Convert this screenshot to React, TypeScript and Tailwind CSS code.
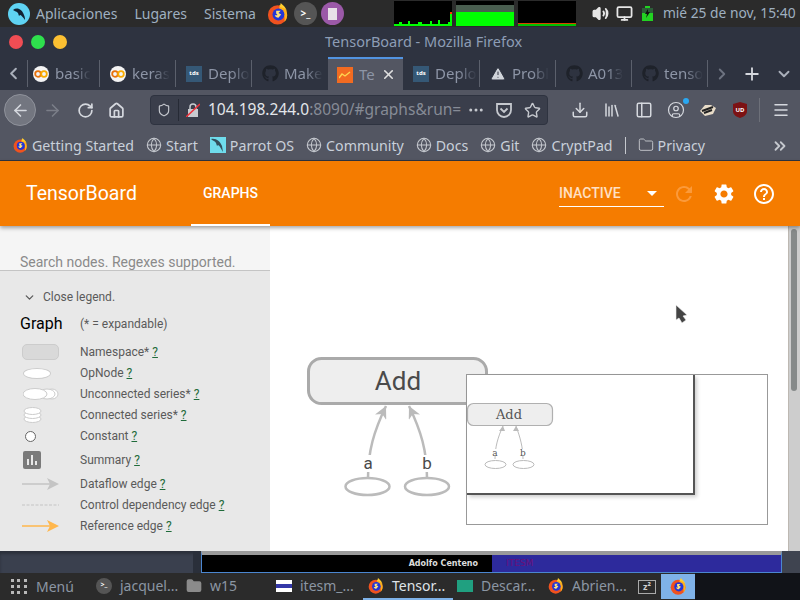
import { ArrowLeft, ArrowRight, ChevronDown, ChevronLeft, ChevronRight, ChevronsRight, Download, Ellipsis, Folder, Globe, Home, Library, Menu, PanelLeft, Plus, RotateCw, Shield, Star, TriangleAlert, Volume2, X, Monitor, UserCircle } from 'lucide-react'
import { FaGithub } from 'react-icons/fa'
import { MdHelpOutline, MdRefresh, MdSettings } from 'react-icons/md'

const ui = { fontFamily: '"Noto Sans", sans-serif' }
const roboto = { fontFamily: 'Roboto, sans-serif' }

function Firefox({ size = 20 }: { size?: number }) {
  return (
    <svg width={size} height={size} viewBox="0 0 24 24" className="shrink-0">
      <circle cx="11.5" cy="13" r="10.5" fill="#f0521f" />
      <path d="M13 2.5c5 .5 9 4.500 9 10.500 0 3-1 5.500-3 7.500 1-5-1-12-6-15 1-1 1-2 0-3z" fill="#ffb11a" />
      <path d="M15 0c2 2 5 4 7 9-2-3-5-4-8-5z" fill="#ffcf30" />
      <circle cx="12.500" cy="12.500" r="6.500" fill="#2236d8" />
      <path d="M10 8.500h5l-2.500 2.500 3 1.500-3 3.500c-2 0-3.500-1-4-3 1 .5 2 .5 3 0l-1.500-1.500z" fill="#ffe27a" />
    </svg>
  )
}

function ColabIcon() {
  return (
    <svg width="16" height="16" viewBox="0 0 16 16" className="shrink-0">
      <circle cx="8" cy="8" r="8" fill="#f4f4f4" />
      <circle cx="5" cy="8" r="2.800" fill="none" stroke="#e8710a" strokeWidth="1.800" />
      <circle cx="11" cy="8" r="2.800" fill="none" stroke="#f9ab00" strokeWidth="1.800" />
    </svg>
  )
}

function TdsIcon() {
  return <div className="w-4 h-4 bg-[#355876] text-white text-[6px] font-bold flex items-center justify-center shrink-0">tds</div>
}

function Tab({ icon, label, width = 76, pad = 9, border = true }: { icon: React.ReactNode; label: string; width?: number; pad?: number; border?: boolean }) {
  return (
    <div className={`flex items-center gap-[5px] h-[27px] overflow-hidden shrink-0 ${border ? 'border-r border-[#5b606c]' : ''}`} style={{ width, paddingLeft: pad }}>
      <div className="w-[18px] flex justify-center shrink-0">{icon}</div>
      <span className="text-[15px] text-[#8d95a6] whitespace-nowrap overflow-hidden [mask-image:linear-gradient(to_right,black_55%,transparent)]">{label}</span>
    </div>
  )
}

function Bookmark({ icon, label }: { icon: React.ReactNode; label: string }) {
  return (
    <div className="flex items-center gap-[4px] shrink-0">
      {icon}
      <span className="text-[14.2px] text-[#c9d0da] whitespace-nowrap">{label}</span>
    </div>
  )
}

function Sparkline({ width, children }: { width: number; children?: React.ReactNode }) {
  return (
    <div className="h-[25px] bg-black relative shrink-0" style={{ width }}>
      {children}
    </div>
  )
}

function Help() {
  return <span className="text-[#1f6b3a] underline">?</span>
}

function LegendRow({ icon, label, h }: { icon: React.ReactNode; label: string; h: number }) {
  return (
    <div className="flex items-center" style={{ height: h }}>
      <div className="w-[60px] flex items-center shrink-0">{icon}</div>
      <span className="text-[12px] text-[#5a5a5a]">
        {label} <Help />
      </span>
    </div>
  )
}

function TaskItem({ icon, label, width, pad = 3, active }: { icon: React.ReactNode; label: string; width: number; pad?: number; active?: boolean }) {
  return (
    <div className={`h-[27px] flex items-center gap-[8px] shrink-0 border-b-2 ${active ? 'border-[#7fb2e8] text-[#dfe3e8]' : 'border-transparent text-[#8b96a3]'}`} style={{ width, paddingLeft: pad }}>
      {icon}
      <span className="text-[14px] whitespace-nowrap">{label}</span>
    </div>
  )
}

function Graph() {
  return (
    <svg width="520" height="325" viewBox="0 0 520 325" className="absolute left-0 top-0">
      <defs>
        <marker id="head" viewBox="0 0 10 10" refX="10" refY="5" markerWidth="5" markerHeight="5" orient="auto">
          <path d="M0 0 10 5 0 10 3 5z" fill="#bbb" />
        </marker>
      </defs>
      <rect x="38.500" y="132.500" width="178" height="45" rx="13" fill="#eee" stroke="#aaa" strokeWidth="3" />
      <text x="128" y="164" textAnchor="middle" fontSize="26" fill="#4a4a4a" style={roboto}>Add</text>
      <path d="M98 252C98 225 104 205 116 180" fill="none" stroke="#bbb" strokeWidth="2.500" markerEnd="url(#head)" />
      <path d="M157 252C157 225 151 205 139 180" fill="none" stroke="#bbb" strokeWidth="2.500" markerEnd="url(#head)" />
      <rect x="88" y="229" width="20" height="17" fill="white" />
      <rect x="147" y="229" width="20" height="17" fill="white" />
      <text x="98" y="243" textAnchor="middle" fontSize="17" fill="#4a4a4a" style={roboto}>a</text>
      <text x="157" y="243" textAnchor="middle" fontSize="17" fill="#4a4a4a" style={roboto}>b</text>
      <ellipse cx="97.500" cy="260.500" rx="22" ry="8.500" fill="white" stroke="#bbb" strokeWidth="2.500" />
      <ellipse cx="157" cy="260.500" rx="22" ry="8.500" fill="white" stroke="#bbb" strokeWidth="2.500" />
    </svg>
  )
}

function Minimap() {
  return (
    <div className="absolute left-[196px] top-[148px] w-[302px] h-[151px] bg-white border border-[#999]">
      <div className="absolute left-0 top-0 w-[228px] h-[120px] border-r-2 border-b-2 border-[#555] shadow-[2px_2px_4px_rgba(0,0,0,0.2)]" />
      <svg width="140" height="110" viewBox="0 0 140 110" className="absolute left-0 top-0">
        <rect x="0.500" y="28.500" width="85" height="22" rx="6" fill="#eee" stroke="#b0b0b0" strokeWidth="1.200" />
        <text x="42" y="44" textAnchor="middle" fontSize="13" fill="#555" fontFamily="'DejaVu Serif', serif">Add</text>
        <path d="M28 84C28 72 31 62 36 51" fill="none" stroke="#bbb" />
        <path d="M56 84C56 72 53 62 49 51" fill="none" stroke="#bbb" />
        <path d="M36 51l-4 5h6zM49 51l-3 5h6z" fill="#bbb" />
        <rect x="25" y="74" width="6" height="7" fill="white" />
        <rect x="53" y="74" width="6" height="7" fill="white" />
        <text x="28" y="81" textAnchor="middle" fontSize="9" fill="#555" fontFamily="'DejaVu Serif', serif">a</text>
        <text x="56" y="81" textAnchor="middle" fontSize="9" fill="#555" fontFamily="'DejaVu Serif', serif">b</text>
        <ellipse cx="28.500" cy="89.500" rx="10.500" ry="4" fill="white" stroke="#bbb" />
        <ellipse cx="56.500" cy="89.500" rx="10.500" ry="4" fill="white" stroke="#bbb" />
      </svg>
    </div>
  )
}

export default function App() {
  return (
    <div className="w-[800px] h-[600px] overflow-hidden flex flex-col bg-[#2b2b2b]" style={ui}>
      {/* desktop top panel */}
      <div className="h-[27px] bg-[#2b2b2b] flex items-center shrink-0 relative">
        <div className="ml-[8px] w-[22px] h-[22px] rounded-full bg-[#5fd3f3] flex items-center justify-center shrink-0">
          <svg width="16" height="16" viewBox="0 0 16 16"><path d="M2 4c4-3 9-1 11 5 1 2 1 4 1 5-2-3-4-5-5-5l-1 1-1-3C5 5 3 5 2 4z" fill="#123" /></svg>
        </div>
        <span className="ml-[6px] text-[14px] text-[#9fb0c0]">Aplicaciones</span>
        <span className="ml-[17px] text-[14px] text-[#9fb0c0]">Lugares</span>
        <span className="ml-[17px] text-[14px] text-[#9fb0c0]">Sistema</span>
        <div className="ml-[11px]"><Firefox size={22} /></div>
        <div className="ml-[5px] w-[23px] h-[23px] rounded-full bg-[#555] text-white text-[10px] font-bold flex items-center justify-center">&gt;_</div>
        <div className="ml-[4px] w-[23px] h-[23px] rounded-full bg-[#9b59a8] flex items-center justify-center">
          <div className="w-[9px] h-[12px] bg-[#e8e0e8]" />
        </div>
        <div className="ml-[50px] flex gap-[4px] items-start self-start mt-px">
          <Sparkline width={58}>
            <svg width="58" height="25" viewBox="0 0 58 25" className="absolute inset-0">
              <path d="M0 25V23h5v-2h3v2h6v-3h2v3h8v-2h4v2h8v-3h2v3h6v-4h2v4h8v-2h2v-9h2V25z" fill="#00ff00" />
              <path d="M56 11h2v2h-2z" fill="#ff3300" />
            </svg>
          </Sparkline>
          <Sparkline width={58}>
            <div className="absolute left-0 right-0 top-[4px] h-[7px] bg-[#4a5e50]" />
            <div className="absolute left-0 right-0 top-[11px] bottom-0 bg-[#00ff00]" />
          </Sparkline>
          <Sparkline width={58}>
            <div className="absolute left-0 right-0 bottom-0 h-[2px] bg-[#00c000]" />
            <div className="absolute left-0 right-0 bottom-[2px] h-px bg-[#d84000]" />
          </Sparkline>
        </div>
        <Volume2 size={17} strokeWidth={2.5} fill="currentColor" className="ml-[16px] text-[#e6e6e6] shrink-0" />
        <Monitor size={17} strokeWidth={2.5} className="ml-[7px] text-[#e6e6e6] shrink-0" />
        <svg width="11" height="15" viewBox="0 0 11 15" className="ml-[9px] shrink-0">
          <path d="M3 0h5v2h3v13H0V2h3z" fill="#22d322" />
          <path d="M0 2h11v5H0z" fill="#2c5f38" />
          <path d="M6 3 3 8h2l-1 4 4-6H6z" fill="#111" />
        </svg>
        <span className="ml-[10px] text-[13.800px] text-[#9fb0c0] whitespace-nowrap">mié 25 de nov, 15:40</span>
      </div>

      {/* firefox title bar */}
      <div className="h-[30px] bg-[#2e3340] flex items-center relative shrink-0">
        <div className="ml-[9px] flex gap-[8px]">
          <div className="w-[14px] h-[14px] rounded-full bg-[#f04d54]" />
          <div className="w-[14px] h-[14px] rounded-full bg-[#2ee04d]" />
          <div className="w-[14px] h-[14px] rounded-full bg-[#fcc032]" />
        </div>
        <div className="ml-[258px] text-[14.5px] text-[#8d9db5] whitespace-nowrap -mt-px">TensorBoard - Mozilla Firefox</div>
      </div>

      {/* tabs */}
      <div className="h-[33px] bg-[#2e3340] flex items-center shrink-0">
        <div className="w-[28px] h-[27px] flex items-center text-[#aab0bb] border-r border-[#5b606c] shrink-0"><ChevronLeft size={19} strokeWidth={2.5} className="ml-[4px]" /></div>
        <Tab icon={<ColabIcon />} label="basic" width={72} pad={4} />
        <Tab icon={<ColabIcon />} label="keras" />
        <Tab icon={<TdsIcon />} label="Deplo" />
        <Tab icon={<FaGithub size={17} className="text-[#1e222a]" />} label="Make" border={false} />
        <div className="w-[75px] h-[33px] self-end bg-[#535662] border-t-2 border-[#5294e2] flex items-center pl-[9px] gap-[6px] shrink-0">
          <div className="w-[16px] h-[16px] bg-[#f26b21] flex items-center justify-center">
            <svg width="12" height="8" viewBox="0 0 12 8"><path d="M0 7l3-4 3 2 5-4" fill="none" stroke="#ffd54f" strokeWidth="1.400" /></svg>
          </div>
          <span className="text-[15px] text-[#8d95a6] w-[16px] overflow-hidden">Te</span>
          <X size={15} strokeWidth={2.5} className="text-[#e0e0e0]" />
        </div>
        <Tab icon={<TdsIcon />} label="Deplo" width={77} />
        <Tab icon={<TriangleAlert size={16} fill="#d0d4da" strokeWidth={1.5} className="text-[#2e3340]" />} label="Probl" />
        <Tab icon={<FaGithub size={17} className="text-[#1e222a]" />} label="A013" />
        <Tab icon={<FaGithub size={17} className="text-[#1e222a]" />} label="tenso" />
        <ChevronRight size={18} strokeWidth={2.5} className="ml-[5px] text-[#6d7380] shrink-0" />
        <Plus size={20} strokeWidth={2.2} className="ml-[11px] text-[#d5d8de] shrink-0" />
        <ChevronDown size={18} strokeWidth={2.5} className="ml-[13px] text-[#aab0bb] shrink-0" />
      </div>

      {/* nav toolbar */}
      <div className="h-[38px] bg-[#535662] flex items-center shrink-0 text-[#d5d8de] pt-[2px]">
        <div className="ml-[4px] w-[32px] h-[32px] rounded-full bg-[#737680] border border-[#8f929b] flex items-center justify-center shrink-0">
          <ArrowLeft size={19} strokeWidth={2} />
        </div>
        <ArrowRight size={19} className="ml-[7px] text-[#7b7e88] shrink-0" />
        <RotateCw size={17} strokeWidth={2.4} className="ml-[15px] shrink-0" />
        <Home size={17} strokeWidth={2.4} className="ml-[14px] shrink-0" />
        <div className="ml-[25px] w-[398px] h-[30px] bg-[#3a3e4b] border border-[#2e3340] rounded-[4px] flex items-center shrink-0">
          <Shield size={14} className="ml-[6px] text-[#c5c8ce] shrink-0" />
          <div className="ml-[7px] w-px h-[22px] bg-[#262a35] shrink-0" />
          <svg width="14" height="14" viewBox="0 0 14 14" className="ml-[7px] shrink-0">
            <path d="M4 6V4a3 3 0 0 1 6 0v2" fill="none" stroke="#c8cbd0" strokeWidth="1.500" />
            <path d="M2 6h10v8H2z" fill="#c8cbd0" />
            <path d="M0 14 14 1" stroke="#f0323c" strokeWidth="1.600" />
          </svg>
          <span className="ml-[8px] text-[15.5px] text-[#e3e6ea] whitespace-nowrap shrink-0">104.198.244.0<span className="text-[#868b96]">:8090/#graphs&amp;run=</span></span>
          <Ellipsis size={18} className="ml-auto text-[#c5c8ce] shrink-0" fill="currentColor" />
          <svg width="18" height="17" viewBox="0 0 18 17" className="ml-[10px] shrink-0"><path d="M2 2h14v6a7 7 0 0 1-14 0zM5.500 6.500 9 10l3.500-3.500" fill="none" stroke="#c5c8ce" strokeWidth="1.800" /></svg>
          <Star size={17} strokeWidth={2} className="ml-[11px] mr-[6px] text-[#c5c8ce] shrink-0" />
        </div>
        <Download size={18} strokeWidth={2} className="ml-[23px] shrink-0" />
        <Library size={18} strokeWidth={2} className="ml-[14px] shrink-0" />
        <PanelLeft size={18} strokeWidth={2} className="ml-[14px] shrink-0" />
        <div className="ml-[14px] relative shrink-0">
          <UserCircle size={18} strokeWidth={1.6} />
          <div className="absolute -right-[4px] -top-[3px] w-[6px] h-[6px] rounded-full bg-[#2aa8f2]" />
        </div>
        <svg width="18" height="14" viewBox="0 0 18 14" className="ml-[14px] shrink-0"><path d="M1 8 6 2h6l5 3-3 6-8 2z" fill="#e8dcc8" /><path d="M3 8l11-4M5 10l8-3" stroke="#222" strokeWidth="2" /></svg>
        <svg width="16" height="18" viewBox="0 0 16 18" className="ml-[15px] shrink-0"><path d="M8 1l7 2v7c0 4-4 6-7 7-3-1-7-3-7-7V3z" fill="#7c1214" /><text x="8" y="11" textAnchor="middle" fontSize="6" fontWeight="700" fill="white">UD</text></svg>
        <div className="ml-[11px] w-px h-[24px] bg-[#6d7079] shrink-0" />
        <Menu size={18} strokeWidth={2} className="ml-[12px] shrink-0" />
      </div>

      {/* bookmarks */}
      <div className="h-[33px] bg-[#535662] flex items-center shrink-0 border-b border-[#2e3340] text-[#c5c8ce] pt-[3px]">
        <div className="ml-[13px]" />
        <Bookmark icon={<Firefox size={15} />} label="Getting Started" />
        <div className="ml-[12px]" />
        <Bookmark icon={<Globe size={16} strokeWidth={1.6} />} label="Start" />
        <div className="ml-[12px]" />
        <Bookmark icon={
          <svg width="16" height="16" viewBox="0 0 16 16"><path d="M0 0h16v16H0z" fill="#6fdcec" /><path d="M1 2c5-1 9 2 11 7l1 6c-2-3-3-6-5-7l-1 1-1-3C5 4 3 4 1 2z" fill="#33505c" /></svg>
        } label="Parrot OS" />
        <div className="ml-[12px]" />
        <Bookmark icon={<Globe size={16} strokeWidth={1.6} />} label="Community" />
        <div className="ml-[12px]" />
        <Bookmark icon={<Globe size={16} strokeWidth={1.6} />} label="Docs" />
        <div className="ml-[12px]" />
        <Bookmark icon={<Globe size={16} strokeWidth={1.6} />} label="Git" />
        <div className="ml-[12px]" />
        <Bookmark icon={<Globe size={16} strokeWidth={1.6} />} label="CryptPad" />
        <div className="ml-[12px] w-px h-[17px] bg-[#c5c8ce]" />
        <div className="ml-[12px]" />
        <Bookmark icon={<Folder size={16} strokeWidth={1.4} />} label="Privacy" />
        <ChevronsRight size={18} strokeWidth={2.4} className="ml-auto mr-[11px]" />
      </div>

      {/* tensorboard header */}
      <div className="h-[65px] bg-[#f57c00] flex shrink-0 relative z-10 shadow-[0_2px_4px_rgba(0,0,0,0.35)]" style={roboto}>
        <div className="w-[191px] pl-[26px] flex items-center text-white text-[19.500px]">TensorBoard</div>
        <div className="w-[79px] flex items-center justify-center text-white text-[14px] font-medium border-b-2 border-white pt-[2px]">GRAPHS</div>
        <div className="ml-[289px] w-[105px] flex items-center justify-between border-b border-white h-[35px] mt-[11px] pt-[8px] pr-[7px] shrink-0">
          <span className="text-[14px] text-[#ffe0c4] font-medium">INACTIVE</span>
          <div className="w-0 h-0 border-x-[5px] border-x-transparent border-t-[5px] border-t-white" />
        </div>
        <MdRefresh size={24} className="ml-[8px] mt-[21px] text-[#fb9a3a] shrink-0" />
        <MdSettings size={24} className="ml-[16px] mt-[21px] text-white shrink-0" />
        <MdHelpOutline size={24} className="ml-[16px] mt-[21px] text-white shrink-0" />
      </div>

      {/* content */}
      <div className="h-[325px] flex shrink-0" style={roboto}>
        <div className="w-[270px] bg-[#e8e8e8] shrink-0">
          <div className="h-[45px] bg-[#f5f5f5] border-b border-[#c4c4c4] pl-[20px] pt-[26px] text-[14px] leading-[20px] text-[#8a8a8a]">Search nodes. Regexes supported.</div>
          <div className="pl-[20px]">
            <div className="flex items-center gap-[7px] h-[14px] mt-[19px] pl-[3px] text-[12px] text-[#5a5a5a]">
              <ChevronDown size={13} strokeWidth={2.4} />
              Close legend.
            </div>
            <div className="flex items-center h-[30px] mt-[5px]">
              <span className="w-[60px] text-[16px] text-black">Graph</span>
              <span className="text-[12px] text-[#5a5a5a]">(* = expandable)</span>
            </div>
            <LegendRow h={25} label="Namespace*" icon={<div className="ml-[2px] w-[37px] h-[16px] rounded-[5px] bg-[#d9d9d9] border border-[#ccc]" />} />
            <LegendRow h={18} label="OpNode" icon={<div className="ml-[3px] w-[28px] h-[11px] rounded-[50%] bg-white border border-[#ccc]" />} />
            <LegendRow h={24} label="Unconnected series*" icon={
              <svg width="36" height="12" viewBox="0 0 36 12" className="ml-[3px]">
                <ellipse cx="29" cy="6" rx="6" ry="5" fill="white" stroke="#ccc" />
                <ellipse cx="24" cy="6" rx="8" ry="5" fill="white" stroke="#ccc" />
                <ellipse cx="12" cy="6" rx="12" ry="5.500" fill="white" stroke="#ccc" />
              </svg>
            } />
            <LegendRow h={18} label="Connected series*" icon={
              <svg width="19" height="16" viewBox="0 0 19 16" className="ml-[3px]">
                <ellipse cx="9.500" cy="12" rx="8.500" ry="3.500" fill="white" stroke="#ccc" />
                <ellipse cx="9.500" cy="8" rx="8.500" ry="3.500" fill="white" stroke="#ccc" />
                <ellipse cx="9.500" cy="4" rx="8.500" ry="3.500" fill="white" stroke="#ccc" />
              </svg>
            } />
            <LegendRow h={24} label="Constant" icon={<div className="ml-[5px] w-[11px] h-[11px] rounded-full bg-white border border-[#666]" />} />
            <LegendRow h={24} label="Summary" icon={
              <div className="ml-[3px] w-[18px] h-[18px] rounded-[2px] bg-[#7a7a7a] flex items-end justify-center gap-[2px] pb-[4px]">
                <div className="w-[2px] h-[6px] bg-[#e8e8e8]" />
                <div className="w-[2px] h-[10px] bg-[#e8e8e8]" />
                <div className="w-[2px] h-[4px] bg-[#e8e8e8]" />
              </div>
            } />
            <LegendRow h={24} label="Dataflow edge" icon={
              <svg width="37" height="12" viewBox="0 0 37 12" className="ml-[2px]"><path d="M0 6h28" stroke="#c4c4c4" strokeWidth="1.500" /><path d="M25 0l12 6-12 6 3-6z" fill="#c4c4c4" /></svg>
            } />
            <LegendRow h={18} label="Control dependency edge" icon={
              <svg width="37" height="4" viewBox="0 0 37 4" className="ml-[2px]"><path d="M0 2h37" stroke="#c4c4c4" strokeWidth="1.200" strokeDasharray="3 1.500" /></svg>
            } />
            <LegendRow h={24} label="Reference edge" icon={
              <svg width="37" height="12" viewBox="0 0 37 12" className="ml-[2px]"><path d="M0 6h28" stroke="#ffb74d" strokeWidth="1.500" /><path d="M25 0l12 6-12 6 3-6z" fill="#ffb74d" /></svg>
            } />
          </div>
        </div>
        <div className="flex-1 bg-white relative overflow-hidden">
          <Graph />
          <Minimap />
          <svg width="14" height="21" viewBox="0 0 14 21" className="absolute left-[405px] top-[78px]"><path d="M1 1v15l3-2 3 5 4-3-3-4 4-1z" fill="#444" stroke="#eee" strokeWidth="0.600" /></svg>
          <div className="absolute right-0 top-0 bottom-0 w-[12px] bg-[#cdcdcd] border-l border-[#bdb8b2]">
            <div className="ml-[2px] w-[6px] mt-[3px] h-[162px] rounded-full bg-[#868a8a]" />
          </div>
        </div>
      </div>

      {/* bottom strip of the window behind */}
      <div className="h-[22px] flex shrink-0 bg-[#3a404e] shadow-[inset_0_3px_3px_rgba(0,0,0,0.25)]">
        <div className="w-[193px]" />
        <div className="w-[8px] bg-[#2a2f3a]" />
        <div className="w-[581px] flex border-l border-r border-b border-[#4b86d0] border-t-[4px] border-t-[#9a9a9a]">
          <div className="w-[290px] bg-black flex justify-end items-center pr-[14px] text-[8px] font-bold text-[#ddd]" style={{ fontFamily: '"DejaVu Sans", sans-serif' }}>Adolfo Centeno</div>
          <div className="flex-1 bg-[#2d2a9c] pl-[14px] flex items-center text-[9px] text-[#6b0f7a]" style={{ fontFamily: '"DejaVu Sans", sans-serif' }}>ITESM</div>
        </div>
        <div className="flex-1 bg-[#3f4450]" />
      </div>

      {/* taskbar */}
      <div className="flex-1 bg-[#2b2b2b] flex items-center">
        <div className="ml-[11px] w-[16px] grid grid-cols-3 gap-[3px] shrink-0">
          {Array.from({ length: 9 }).map((_, i) => <div key={i} className="w-[3px] h-[3px] bg-[#b8b8b8]" />)}
        </div>
        <span className="ml-[9px] text-[14px] text-[#8b96a3] w-[57px] shrink-0">Menú</span>
        <TaskItem width={90} label="jacquel..." icon={<div className="w-[16px] h-[16px] rounded-full bg-[#555] text-white text-[7px] font-bold flex items-center justify-center shrink-0">&gt;_</div>} />
        <TaskItem width={90} label="w15" icon={<Folder size={16} fill="#8b8b8b" className="text-[#8b8b8b]" />} />
        <TaskItem width={90} label="itesm_..." icon={<div className="w-[16px] h-[12px] bg-white flex items-center"><div className="w-full h-[4px] bg-[#3438a8]" /></div>} />
        <TaskItem active width={90} pad={5} label="Tensor..." icon={<Firefox size={16} />} />
        <TaskItem width={90} pad={4} label="Descar..." icon={<div className="w-[16px] h-[12px] bg-[#20a080]" />} />
        <TaskItem width={90} pad={5} label="Abrien..." icon={<Firefox size={16} />} />
        <div className="ml-[5px] w-[18px] text-[#cfcfcf] text-[9px] font-bold border border-[#aaa] h-[14px] flex items-center justify-center shrink-0">z²</div>
        <div className="ml-[5px] w-[34px] h-[25px] bg-[#7fb2e8] flex items-center justify-center shrink-0"><Firefox size={17} /></div>
        <div className="flex-1 h-full bg-[#111318]" />
      </div>
    </div>
  )
}
